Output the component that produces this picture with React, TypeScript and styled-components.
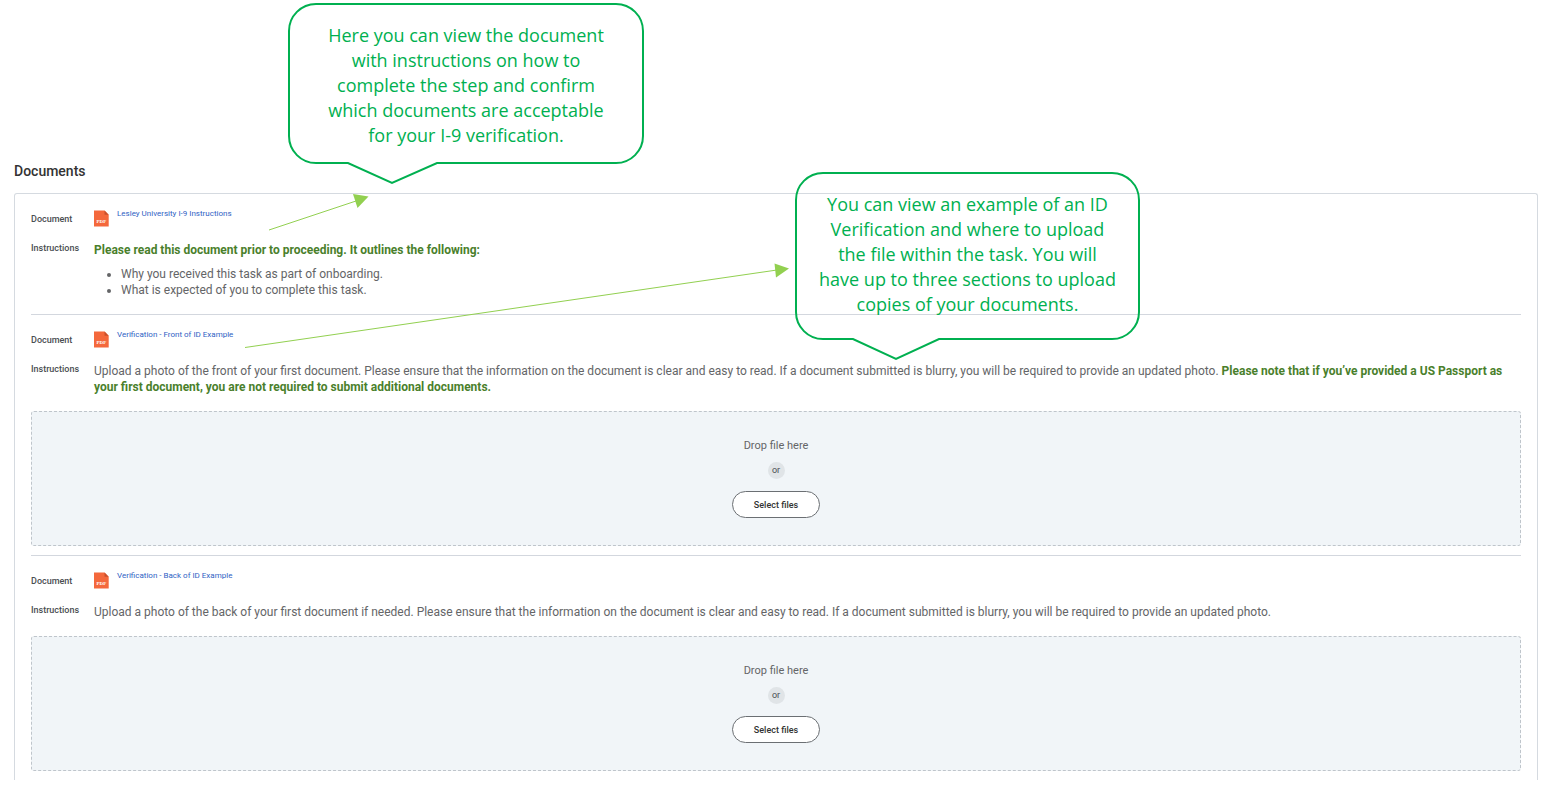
import React from "react";
import styled, { createGlobalStyle } from "styled-components";

const GlobalStyle = createGlobalStyle`
  *, *::before, *::after { box-sizing: border-box; }
  body {
    margin: 0;
    background: #fff;
    color: #646567;
    font-family: Roboto, "Liberation Sans", sans-serif;
    font-size: 12px;
    line-height: 16px;
  }
`;

const Page = styled.main`
  position: relative;
  padding: 160px 7px 8px 14px;
`;

const Title = styled.h1`
  margin: 0 0 11px;
  color: #333;
  font-size: 14px;
  font-weight: 500;
  line-height: 22px;
`;

const Panel = styled.div`
  padding: 0 16px;
  border: 1px solid #d5dae0;
  border-bottom: 0;
  border-radius: 3px 3px 0 0;
`;

const Section = styled.section`
  padding: 16px 0 9px;

  & + & {
    border-top: 1px solid #d3d7de;
  }
`;

const Fields = styled.dl`
  display: grid;
  grid-template-columns: 50px minmax(0, 1fr);
  column-gap: 13px;
  row-gap: 15px;
  margin: 0;
`;

const Label = styled.dt<{ $drop?: boolean }>`
  padding-top: ${(p) => (p.$drop ? 3 : 0)}px;
  color: #4a4e52;
  font-size: 9px;
  font-weight: 500;
  line-height: 13px;
`;

const Value = styled.dd`
  margin: 0;
`;

const FileRow = styled(Value)`
  display: flex;
  align-items: flex-start;
  gap: 8px;
`;

const FileLink = styled.a`
  color: #2f62c4;
  font-size: 8px;
  line-height: 8px;
  text-decoration: none;
`;

const Note = styled.strong`
  color: #4a7f2c;
  font-weight: 700;
`;

const Bullets = styled.ul`
  margin: 8px 0 7px;
  padding-left: 27px;
`;

const DropZone = styled.div`
  display: flex;
  flex-direction: column;
  align-items: center;
  margin-top: 16px;
  padding: 26px 0;
  border: 1px dashed #bfc5cb;
  border-radius: 3px;
  background: #f1f5f8;
  font-size: 11px;
`;

const Or = styled.span`
  width: 17px;
  margin: 8px 0 12px;
  border-radius: 50%;
  background: #e0e4e7;
  color: #4a4e52;
  font-size: 9px;
  line-height: 17px;
  text-align: center;
`;

const SelectButton = styled.button`
  height: 27px;
  margin-bottom: 1px;
  padding: 0 21px;
  border: 1px solid #6b6f73;
  border-radius: 14px;
  background: #fff;
  color: #333;
  font-family: inherit;
  font-size: 9px;
  font-weight: 500;
`;

const CalloutBox = styled.aside<{ $x: number; $y: number; $w: number; $h: number }>`
  position: absolute;
  left: ${(p) => p.$x}px;
  top: ${(p) => p.$y}px;
  display: flex;
  align-items: flex-start;
  justify-content: center;
  width: ${(p) => p.$w}px;
  height: ${(p) => p.$h}px;
  padding-top: 20px;
  color: #00b050;
  font-family: "Open Sans", "Noto Sans", sans-serif;
  font-size: 18px;
  font-weight: 500;
  line-height: 25px;
  text-align: center;
  white-space: nowrap;
`;

const Outline = styled.svg`
  position: absolute;
  left: 0;
  top: 0;
  overflow: visible;
`;

const Arrows = styled.svg`
  position: absolute;
  left: 0;
  top: 0;
  pointer-events: none;
`;

const Callout = ({ x, y, w, h, tail, lines }: {
  x: number; y: number; w: number; h: number; tail: [number, number, number]; lines: string[];
}) => {
  const r = 28;
  const [start, tip, end] = tail;
  return (
    <CalloutBox $x={x} $y={y} $w={w} $h={h}>
      <Outline width={w} height={h} aria-hidden="true">
        <path
          d={`M${r} 1H${w - r}A${r - 1} ${r - 1} 0 0 1 ${w - 1} ${r}V${h - r}A${r - 1} ${r - 1} 0 0 1 ${w - r} ${h - 1}H${end}L${tip} ${h + 19}L${start} ${h - 1}H${r}A${r - 1} ${r - 1} 0 0 1 1 ${h - r}V${r}A${r - 1} ${r - 1} 0 0 1 ${r} 1Z`}
          fill="none"
          stroke="#00b050"
          strokeWidth="2"
        />
      </Outline>
      <div>
        {lines.map((line) => (
          <div key={line}>{line}</div>
        ))}
      </div>
    </CalloutBox>
  );
};

const PdfIcon = () => (
  <svg width="15" height="17" viewBox="0 0 15 17" aria-hidden="true">
    <path d="M0 .5H10.5L14.7 4.7V16.5H0Z" fill="#f4683c" />
    <path d="M10.5 .5L14.7 4.7H10.5Z" fill="#c9502c" />
    <text x="7.4" y="13.2" fill="#fff" fontFamily="Liberation Serif, serif" fontSize="5" fontWeight="700" textAnchor="middle">PDF</text>
  </svg>
);

const DocumentSection = ({ file, upload, children }: {
  file: string; upload?: boolean; children: React.ReactNode;
}) => (
  <Section>
    <Fields>
      <Label $drop>Document</Label>
      <FileRow>
        <PdfIcon />
        <FileLink href="#">{file}</FileLink>
      </FileRow>
      <Label>Instructions</Label>
      <Value>{children}</Value>
    </Fields>
    {upload && (
      <DropZone>
        <span>Drop file here</span>
        <Or>or</Or>
        <SelectButton type="button">Select files</SelectButton>
      </DropZone>
    )}
  </Section>
);

export default function App() {
  return (
    <>
      <GlobalStyle />
      <Page>
        <Title>Documents</Title>
        <Panel>
          <DocumentSection file="Lesley University I-9 Instructions">
            <Note>Please read this document prior to proceeding. It outlines the following:</Note>
            <Bullets>
              <li>Why you received this task as part of onboarding.</li>
              <li>What is expected of you to complete this task.</li>
            </Bullets>
          </DocumentSection>
          <DocumentSection file="Verification - Front of ID Example" upload>
            Upload a photo of the front of your first document. Please ensure that the information on the document is clear and easy to read. If a document submitted is blurry, you will be required to provide an updated photo.{" "}
            <Note>Please note that if you’ve provided a US Passport as your first document, you are not required to submit additional documents.</Note>
          </DocumentSection>
          <DocumentSection file="Verification - Back of ID Example" upload>
            Upload a photo of the back of your first document if needed. Please ensure that the information on the document is clear and easy to read. If a document submitted is blurry, you will be required to provide an updated photo.
          </DocumentSection>
        </Panel>

        <Arrows width="800" height="360" aria-hidden="true">
          <g stroke="#92d050" strokeWidth="1">
            <path d="M269 230L356 201" />
            <path d="M245 347.5L777 270" />
          </g>
          <g fill="#92d050">
            <path d="M353 194L368.500 196.500L357.500 208Z" />
            <path d="M774.500 263.500L789 268.500L776 277.500Z" />
          </g>
        </Arrows>
        <Callout
          x={288} y={3} w={356} h={161} tail={[60, 104, 149]}
          lines={[
            "Here you can view the document",
            "with instructions on how to",
            "complete the step and confirm",
            "which documents are acceptable",
            "for your I-9 verification.",
          ]}
        />
        <Callout
          x={795} y={172} w={345} h={168} tail={[58, 101, 144]}
          lines={[
            "You can view an example of an ID",
            "Verification and where to upload",
            "the file within the task. You will",
            "have up to three sections to upload",
            "copies of your documents.",
          ]}
        />
      </Page>
    </>
  );
}
